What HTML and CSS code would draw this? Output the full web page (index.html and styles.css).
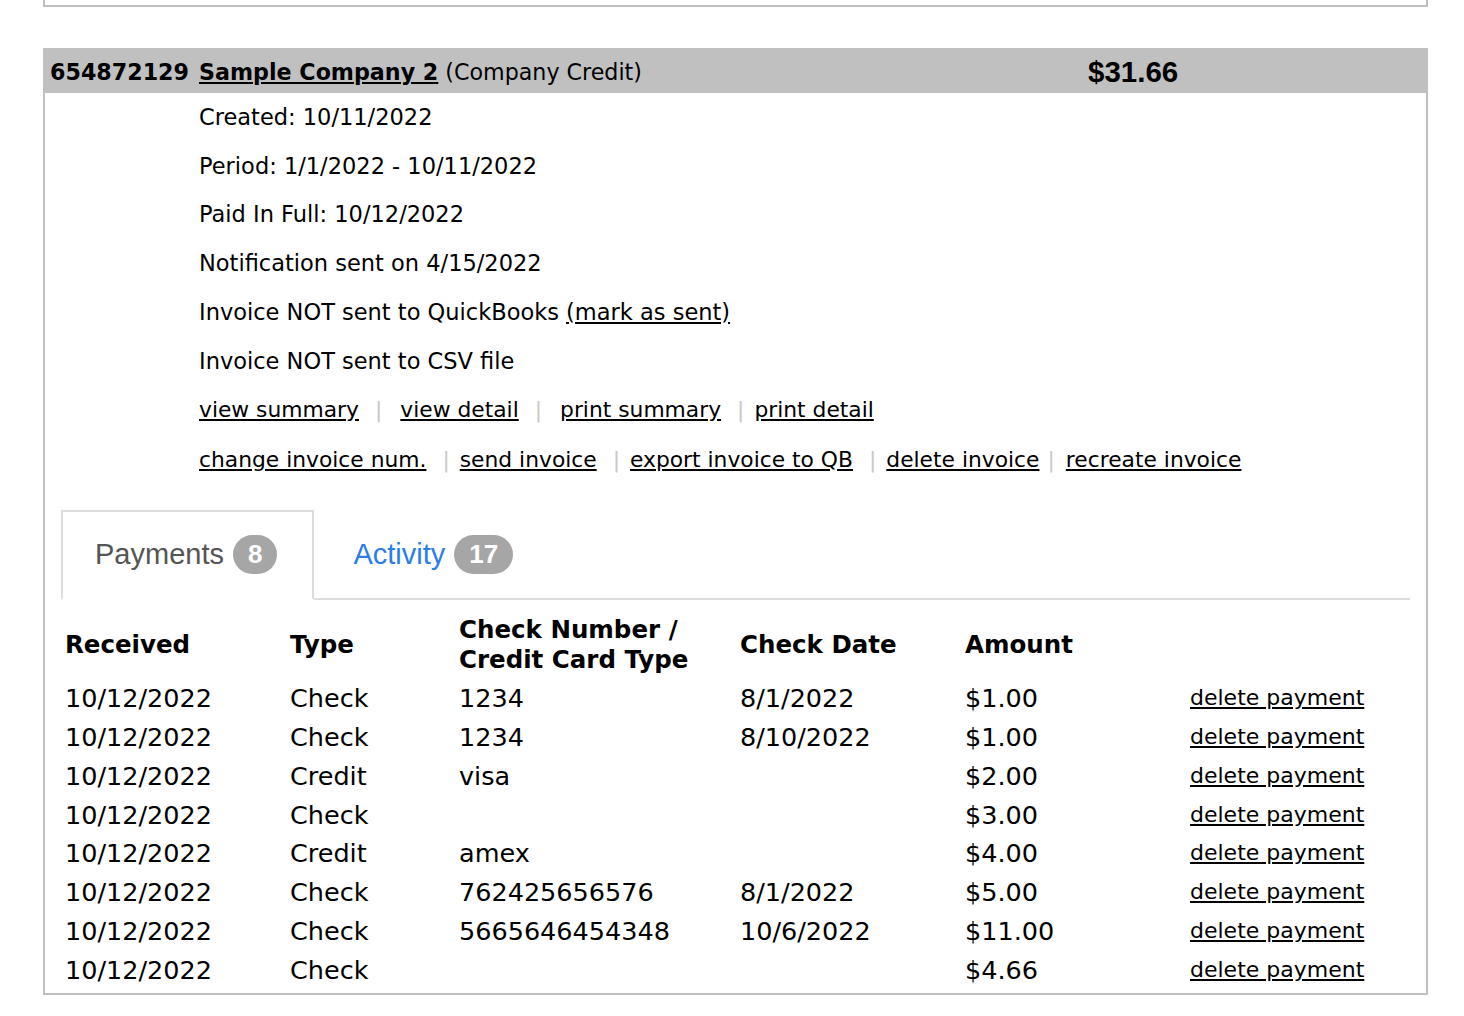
FILE: index.html
```html
<!DOCTYPE html>
<html lang="en">
<head>
  <meta charset="UTF-8">
  <meta name="viewport" content="width=device-width, initial-scale=1.0">
  <title>Invoices</title>
  <link rel="stylesheet" href="styles.css">
</head>
<body>
  <div class="invoice invoice-prev"></div>

  <div class="invoice">
    <div class="invoice-head">
      <div class="invoice-title">
        <b>654872129</b> <a href="#" class="company">Sample Company 2</a> (Company Credit)
      </div>
      <div class="invoice-total">$31.66</div>
    </div>

    <div class="details">
      <div class="line">Created: 10/11/2022</div>
      <div class="line">Period: 1/1/2022 - 10/11/2022</div>
      <div class="line">Paid In Full: 10/12/2022</div>
      <div class="line">Notification sent on 4/15/2022</div>
      <div class="line">Invoice NOT sent to QuickBooks <a href="#">(mark as sent)</a></div>
      <div class="line">Invoice NOT sent to CSV file</div>
      <div class="line links">
        <a href="#">view summary</a><span class="sep sep-w">|</span><a href="#">view detail</a><span class="sep sep-w">|</span><a href="#">print summary</a><span class="sep">|</span><a href="#">print detail</a>
      </div>
      <div class="line links">
        <a href="#">change invoice num.</a><span class="sep">|</span><a href="#">send invoice</a><span class="sep">|</span><a href="#">export invoice to QB</a><span class="sep">|</span><a href="#">delete invoice</a><span class="sep sep-s">|</span><a href="#">recreate invoice</a>
      </div>
    </div>

    <div class="tabs-wrap">
      <ul class="tabs">
        <li class="tab active"><a href="#">Payments <span class="badge">8</span></a></li>
        <li class="tab"><a href="#">Activity <span class="badge">17</span></a></li>
      </ul>

      <table class="payments">
        <thead>
          <tr>
            <th class="c-rec">Received</th>
            <th class="c-type">Type</th>
            <th class="c-num">Check Number /<br>Credit Card Type</th>
            <th class="c-date">Check Date</th>
            <th class="c-amt">Amount</th>
            <th></th>
          </tr>
        </thead>
        <tbody>
          <tr><td>10/12/2022</td><td>Check</td><td>1234</td><td>8/1/2022</td><td>$1.00</td><td class="act"><a href="#">delete payment</a></td></tr>
          <tr><td>10/12/2022</td><td>Check</td><td>1234</td><td>8/10/2022</td><td>$1.00</td><td class="act"><a href="#">delete payment</a></td></tr>
          <tr><td>10/12/2022</td><td>Credit</td><td>visa</td><td></td><td>$2.00</td><td class="act"><a href="#">delete payment</a></td></tr>
          <tr><td>10/12/2022</td><td>Check</td><td></td><td></td><td>$3.00</td><td class="act"><a href="#">delete payment</a></td></tr>
          <tr><td>10/12/2022</td><td>Credit</td><td>amex</td><td></td><td>$4.00</td><td class="act"><a href="#">delete payment</a></td></tr>
          <tr><td>10/12/2022</td><td>Check</td><td>762425656576</td><td>8/1/2022</td><td>$5.00</td><td class="act"><a href="#">delete payment</a></td></tr>
          <tr><td>10/12/2022</td><td>Check</td><td>5665646454348</td><td>10/6/2022</td><td>$11.00</td><td class="act"><a href="#">delete payment</a></td></tr>
          <tr><td>10/12/2022</td><td>Check</td><td></td><td></td><td>$4.66</td><td class="act"><a href="#">delete payment</a></td></tr>
        </tbody>
      </table>
    </div>
  </div>
</body>
</html>
```

FILE: styles.css
```css
body {
  font-family: "DejaVu Sans", Verdana, sans-serif;
  font-size: 22px;
  color: #000;
  margin: 0;
  padding: 0;
  background-color: #fff;
}

a {
  color: #000;
  text-decoration: underline;
}

.invoice {
  width: 1381px;
  margin: 41px 0 0 43px;
  border: 2px solid #c0c0c0;
}

.invoice-prev {
  height: 5px;
  margin-top: 0;
  border-top: none;
}

.invoice-head {
  display: flex;
  align-items: center;
  height: 43px;
  background-color: #c0c0c0;
  padding-left: 5px;
}

.invoice-title {
  flex: 1;
  font-size: 22.2px;
}

.invoice-title b,
.company {
  font-weight: bold;
}

.company {
  margin-left: 3px;
}

.invoice-total {
  width: 338px;
  font-family: "Liberation Sans", Arial, sans-serif;
  font-weight: bold;
  font-size: 29.5px;
}

.details {
  padding-left: 154px;
  font-size: 22.5px;
}

.line {
  line-height: 48.7px;
  white-space: nowrap;
}

.links {
  display: flex;
  align-items: baseline;
  font-size: 21.8px;
  padding-top: 1px;
}

.sep {
  color: #c8c8c8;
  margin: 0 10px 0 16px;
}

.sep-w {
  margin-right: 18px;
}

.sep-s {
  margin: 0 11px 0 8px;
}

.tabs-wrap {
  padding: 25px 16px 4px 16px;
}

.tabs {
  list-style: none;
  margin: 0;
  padding: 0;
  display: flex;
  border-bottom: 2px solid #ddd;
  font-family: "Liberation Sans", Arial, sans-serif;
  font-size: 29px;
}

.tab {
  margin-bottom: -2px;
}

.tab a {
  display: flex;
  align-items: center;
  height: 86px;
  padding: 0 35px 0 32px;
  text-decoration: none;
  color: #2b7de9;
  border: 2px solid transparent;
}

.tab.active a {
  color: #555;
  border-color: #ddd;
  border-bottom-color: #fff;
  background-color: #fff;
}

.tab + .tab a {
  padding-left: 37px;
}

.badge {
  display: inline-block;
  margin-left: 9px;
  height: 39px;
  line-height: 39px;
  padding: 0 15px;
  border-radius: 20px;
  background-color: #a6a6a6;
  color: #fff;
  font-size: 26px;
  font-weight: bold;
  text-align: center;
}

.payments {
  border-collapse: collapse;
  margin-top: 12px;
  font-size: 25.5px;
  text-align: left;
}

.payments th {
  font-size: 24.5px;
  font-weight: bold;
  line-height: 30px;
  padding: 3px 4px 4px 4px;
  vertical-align: middle;
}

.payments td {
  height: 38.85px;
  padding: 0 4px;
  line-height: 30px;
  white-space: nowrap;
}

.c-rec { width: 217px; }
.c-type { width: 161px; }
.c-num { width: 273px; }
.c-date { width: 217px; }
.c-amt { width: 217px; }

.payments td.act {
  font-size: 22px;
}
```
